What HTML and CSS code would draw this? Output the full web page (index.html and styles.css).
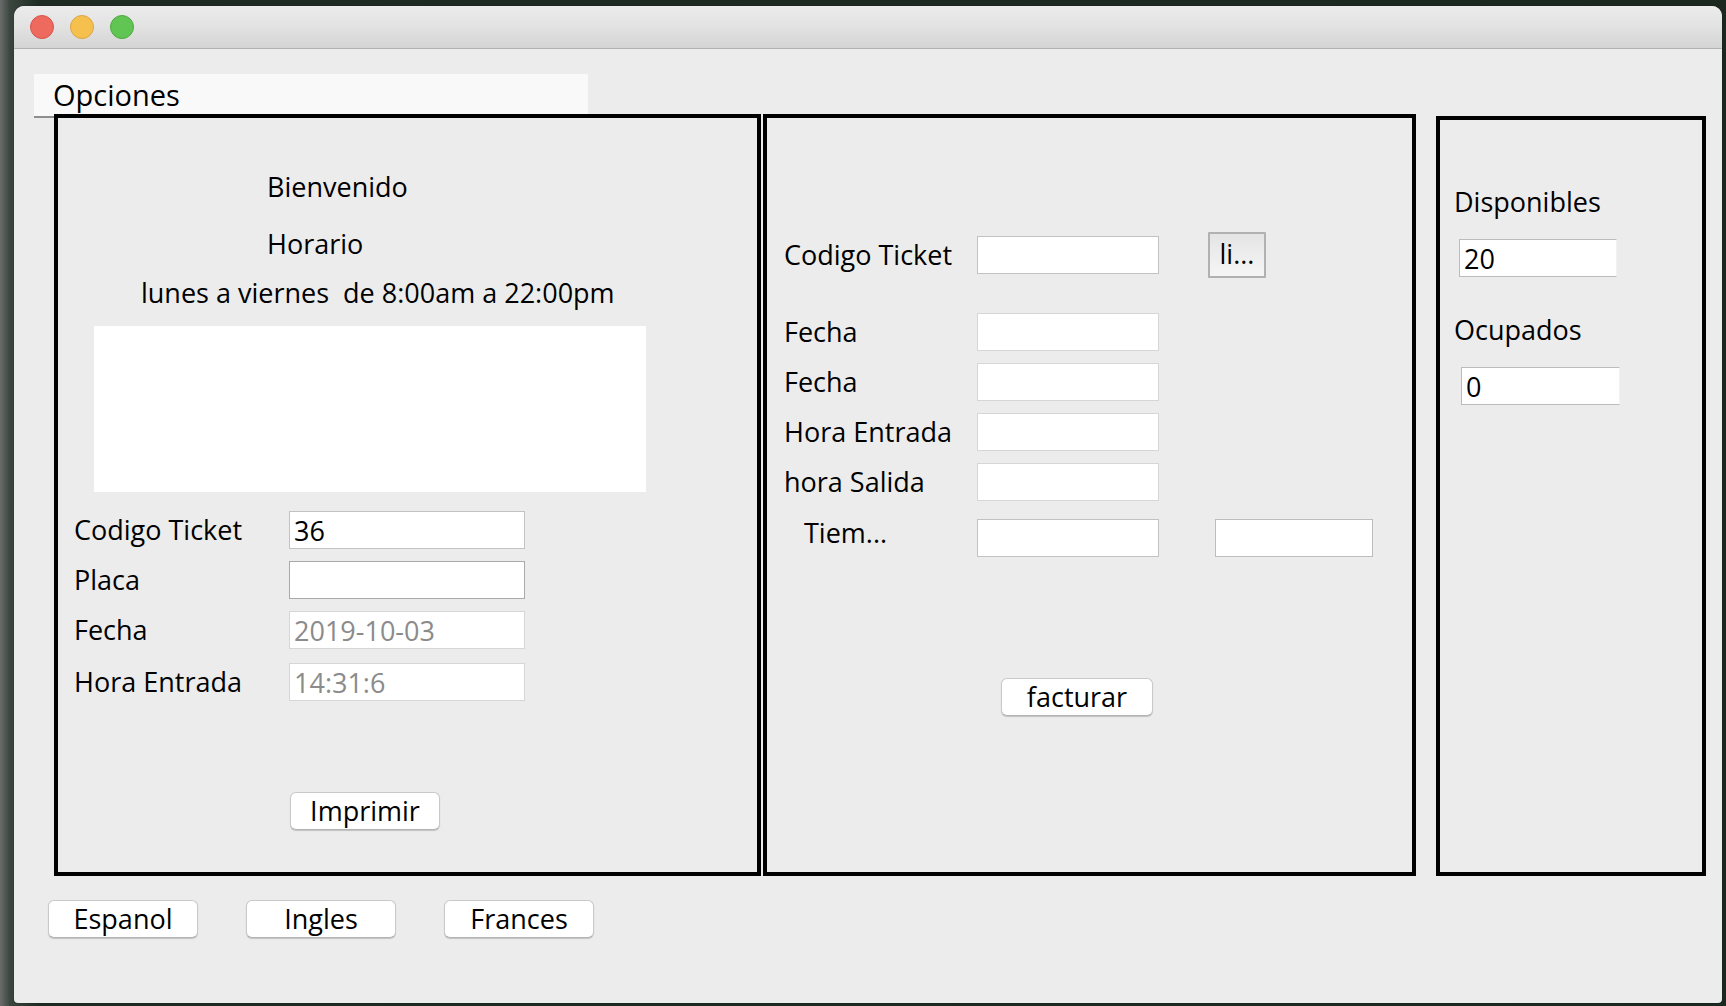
FILE: index.html
```html
<!DOCTYPE html>
<html lang="es">
<head>
<meta charset="utf-8">
<title>Parqueadero</title>
<link rel="stylesheet" href="styles.css">
</head>
<body>
<div class="window">
  <div class="titlebar">
    <span class="light red"></span>
    <span class="light yellow"></span>
    <span class="light green"></span>
  </div>
  <div class="content">
    <div class="tab">Opciones</div>
    <div class="panels">
      <section class="panel panel-left">
        <div class="text welcome">Bienvenido</div>
        <div class="text horario">Horario</div>
        <div class="text schedule">lunes a viernes&nbsp; de 8:00am a 22:00pm</div>
        <div class="image-box"></div>
        <div class="form-left">
          <div class="row"><span class="label">Codigo Ticket</span><input class="field field-soft" type="text" value="36" readonly></div>
          <div class="row"><span class="label">Placa</span><input class="field field-dark" type="text" value="" readonly></div>
          <div class="row"><span class="label">Fecha</span><input class="field field-light dim" type="text" value="2019-10-03" readonly></div>
          <div class="row row-last"><span class="label">Hora Entrada</span><input class="field field-light dim" type="text" value="14:31:6" readonly></div>
        </div>
        <button class="btn btn-imprimir">Imprimir</button>
      </section>

      <section class="panel panel-mid">
        <div class="row-code">
          <span class="label label-mid">Codigo Ticket</span>
          <input class="field field-mid field-soft" type="text" value="" readonly>
          <button class="btn-square">li...</button>
        </div>
        <div class="form-mid">
          <div class="row"><span class="label label-mid">Fecha</span><input class="field field-mid field-light" type="text" value="" readonly></div>
          <div class="row"><span class="label label-mid">Fecha</span><input class="field field-mid field-light" type="text" value="" readonly></div>
          <div class="row"><span class="label label-mid">Hora Entrada</span><input class="field field-mid field-light" type="text" value="" readonly></div>
          <div class="row"><span class="label label-mid">hora Salida</span><input class="field field-mid field-light" type="text" value="" readonly></div>
        </div>
        <div class="row-tiempo">
          <span class="label label-tiem">Tiem...</span>
          <input class="field field-mid field-soft" type="text" value="" readonly>
          <input class="field field-extra field-soft" type="text" value="" readonly>
        </div>
        <button class="btn btn-facturar">facturar</button>
      </section>

      <section class="panel panel-right">
        <div class="text stat-label stat-first">Disponibles</div>
        <input class="field field-stat field-soft" type="text" value="20" readonly>
        <div class="text stat-label stat-second">Ocupados</div>
        <input class="field field-stat field-stat-2 field-soft" type="text" value="0" readonly>
      </section>
    </div>
    <div class="lang-bar">
      <button class="btn btn-lang">Espanol</button>
      <button class="btn btn-lang">Ingles</button>
      <button class="btn btn-lang">Frances</button>
    </div>
  </div>
</div>
</body>
</html>
```

FILE: styles.css
```css
* {
  box-sizing: border-box;
}

html, body {
  margin: 0;
  padding: 0;
  width: 1726px;
  height: 1006px;
  overflow: hidden;
}

body {
  background: linear-gradient(90deg, #6a6d6b 0px, #3a453e 10px, #1d2b22 40px, #1a2820 100%);
  font-family: "Open Sans", "Liberation Sans", sans-serif;
  color: #000;
}

.window {
  margin: 6px 0 0 14px;
  width: 1708px;
  height: 997px;
  background: #ececec;
  border-radius: 10px 10px 4px 4px;
  overflow: hidden;
  box-shadow: 0 0 1px rgba(0, 0, 0, 0.6);
}

.titlebar {
  height: 43px;
  display: flex;
  align-items: center;
  gap: 16px;
  padding-left: 16px;
  padding-bottom: 1px;
  background: linear-gradient(180deg, #ececec 0%, #e2e2e2 50%, #d4d4d4 100%);
  border-bottom: 1px solid #b3b3b3;
}

.light {
  width: 24px;
  height: 24px;
  border-radius: 50%;
  display: block;
}

.red {
  background: #ee6a5f;
  border: 1px solid #d5554b;
}

.yellow {
  background: #f6c04f;
  border: 1px solid #dba442;
}

.green {
  background: #61c554;
  border: 1px solid #4fa840;
}

.content {
  padding-left: 20px;
}

.tab {
  margin-top: 25px;
  width: 554px;
  height: 44px;
  line-height: 42px;
  padding-left: 19px;
  font-size: 29px;
  background: #f9f9f9;
  border-bottom: 2px solid #8e8e8e;
}

.panels {
  margin-top: -4px;
  margin-left: 20px;
  display: flex;
  align-items: flex-start;
  gap: 2px;
}

.panel {
  border: 4px solid #000;
  background: #ececec;
  height: 762px;
  display: flex;
  flex-direction: column;
  align-items: flex-start;
}

.panel-left {
  width: 707px;
}

.panel-mid {
  width: 653px;
}

.panel-right {
  width: 270px;
  height: 760px;
  margin-top: 2px;
  margin-left: 18px;
}

.text {
  font-size: 27px;
  line-height: 37px;
  white-space: pre;
}

.welcome {
  margin-top: 50px;
  margin-left: 209px;
}

.horario {
  margin-top: 20px;
  margin-left: 209px;
}

.schedule {
  margin-top: 12px;
  margin-left: 83px;
}

.image-box {
  margin-top: 15px;
  margin-left: 36px;
  width: 552px;
  height: 166px;
  background: #fff;
}

.form-left {
  margin-top: 19px;
  padding-left: 16px;
  display: grid;
  grid-template-columns: 215px 236px;
  row-gap: 12px;
}

.row {
  display: contents;
}

.row-last .label,
.row-last .field {
  margin-top: 2px;
}

.label {
  font-size: 27px;
  line-height: 38px;
  height: 38px;
  white-space: nowrap;
}

.field {
  height: 38px;
  margin: 0;
  padding: 0 0 0 4px;
  font-family: "Open Sans", "Liberation Sans", sans-serif;
  font-size: 27px;
  color: #000;
  background: #fff;
  border: 1px solid #c4c4c4;
  border-radius: 0;
  outline: none;
}

.field-soft {
  border-color: #c2c2c2;
}

.field-dark {
  border-color: #a9a9a9;
}

.field-light {
  border-color: #d6d6d6;
}

.dim {
  color: #8b8b8b;
}

.btn {
  font-family: "Open Sans", "Liberation Sans", sans-serif;
  font-size: 27px;
  line-height: 36px;
  height: 38px;
  padding: 0;
  color: #000;
  background: #fff;
  border: 1px solid #c9c9c9;
  border-bottom-color: #b3b3b3;
  border-radius: 6px;
  box-shadow: 0 1px 1px rgba(0, 0, 0, 0.18);
}

.btn-imprimir {
  margin-top: 91px;
  margin-left: 232px;
  width: 150px;
}

/* middle panel */
.row-code {
  margin-top: 114px;
  padding-left: 17px;
  display: flex;
  align-items: center;
  height: 46px;
}

.label-mid {
  width: 193px;
}

.field-mid {
  width: 182px;
}

.btn-square {
  margin-left: 49px;
  width: 58px;
  height: 46px;
  padding: 0 0 4px;
  font-family: "Open Sans", "Liberation Sans", sans-serif;
  font-size: 27px;
  color: #000;
  background: linear-gradient(180deg, #e4e4e4 0%, #efefef 60%, #f5f5f5 100%);
  border: 2px solid #b1b1b1;
  border-radius: 1px;
}

.form-mid {
  margin-top: 35px;
  padding-left: 17px;
  display: grid;
  grid-template-columns: 193px 182px;
  row-gap: 12px;
}

.row-tiempo {
  margin-top: 18px;
  padding-left: 37px;
  display: flex;
  align-items: flex-start;
  height: 38px;
}

.label-tiem {
  width: 173px;
  line-height: 28px;
  height: 28px;
}

.field-extra {
  margin-left: 56px;
  width: 158px;
  border-color: #bdbdbd;
}

.btn-facturar {
  margin-top: 121px;
  margin-left: 234px;
  width: 152px;
}

/* right panel */
.stat-label {
  padding-left: 14px;
}

.stat-first {
  margin-top: 63px;
}

.stat-second {
  margin-top: 34px;
}

.field-stat {
  margin-top: 19px;
  margin-left: 19px;
  width: 158px;
  border-color: #bcbcbc;
  border-right-color: #f2f2f2;
}

.field-stat-2 {
  margin-left: 21px;
  width: 159px;
}

.lang-bar {
  margin-top: 24px;
  margin-left: 14px;
  display: flex;
  gap: 48px;
}

.btn-lang {
  width: 150px;
}
```
